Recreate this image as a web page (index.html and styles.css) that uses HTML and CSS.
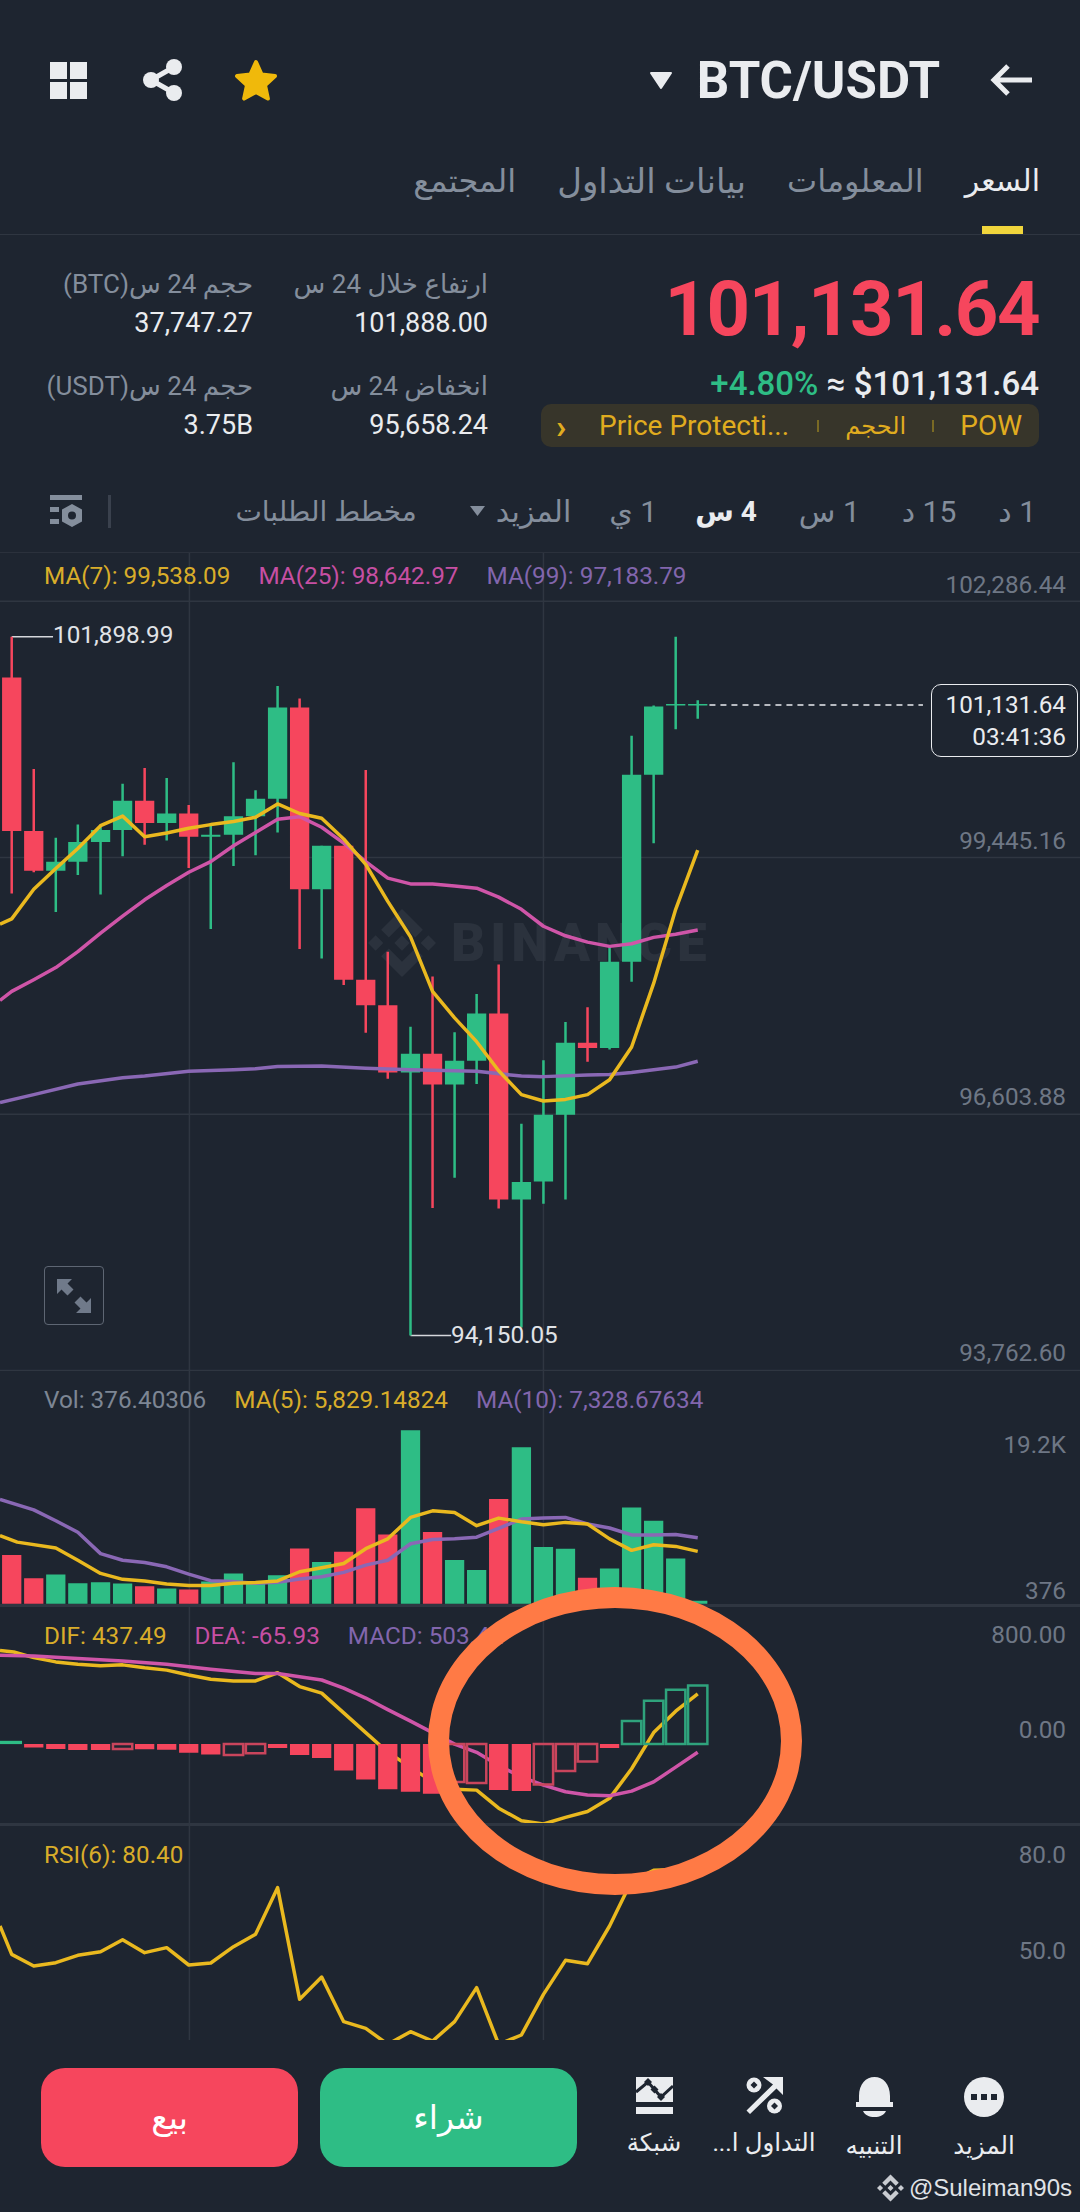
FILE: index.html
```html
<!DOCTYPE html>
<html lang="ar">
<head>
    <meta charset="utf-8">
    <title>BTC/USDT</title>
    <link rel="stylesheet" href="styles.css">
</head>
<body>
<div class="page">

    <div class="topbar">
        <div class="top-tools">
            <svg class="ico-grid" width="37" height="37" viewBox="0 0 37 37"><path d="M0 0h17v17H0zM20 0h17v17H20zM0 20h17v17H0zM20 20h17v17H20z"/></svg>
            <svg class="ico-share" width="40" height="42" viewBox="0 0 40 42"><path class="share-line" d="M31 8L8 21L31 34"/><circle cx="31" cy="8" r="8"/><circle cx="8" cy="21" r="8"/><circle cx="31" cy="34" r="8"/></svg>
            <svg class="ico-star" width="44" height="42" viewBox="0 0 44 42"><path d="M22 3l5.6 12.6 13.4 1.4-10 9.2 2.9 13.4L22 33l-11.9 6.6L13 26.2 3 17l13.4-1.4z"/></svg>
        </div>
        <div class="pair">
            <svg class="ico-caret" width="26" height="19" viewBox="0 0 26 19"><path d="M3 2h20L13 17z"/></svg>
            <span class="pair-name">BTC/USDT</span>
            <svg class="ico-back" width="44" height="34" viewBox="0 0 44 34"><path d="M42 17H4M18 3L4 17l14 14"/></svg>
        </div>
    </div>

    <div class="tabs" dir="rtl">
        <span class="tab active">السعر</span>
        <span class="tab">المعلومات</span>
        <span class="tab tab-data">بيانات التداول</span>
        <span class="tab">المجتمع</span>
    </div>

    <div class="stats">
        <div class="stat-col col-vol" dir="rtl">
            <div class="stat">
                <div class="stat-label">حجم 24 س(BTC)</div>
                <div class="stat-value">37,747.27</div>
            </div>
            <div class="stat">
                <div class="stat-label">حجم 24 س(USDT)</div>
                <div class="stat-value">3.75B</div>
            </div>
        </div>
        <div class="stat-col col-range" dir="rtl">
            <div class="stat">
                <div class="stat-label">ارتفاع خلال 24 س</div>
                <div class="stat-value">101,888.00</div>
            </div>
            <div class="stat">
                <div class="stat-label">انخفاض 24 س</div>
                <div class="stat-value">95,658.24</div>
            </div>
        </div>
        <div class="price-col">
            <div class="price">101,131.64</div>
            <div class="change"><span class="pct">+4.80%</span> ≈ $101,131.64</div>
            <div class="tags">
                <span class="tag-chev">›</span>
                <span class="tag-main">Price Protecti...</span>
                <i class="tag-sep"></i>
                <span class="tag-ar">الحجم</span>
                <i class="tag-sep"></i>
                <span>POW</span>
            </div>
        </div>
    </div>

    <div class="intervals" dir="rtl">
        <span>1 د</span>
        <span>15 د</span>
        <span>1 س</span>
        <span class="on">4 س</span>
        <span>1 ي</span>
        <span class="more">المزيد <svg width="17" height="12" viewBox="0 0 17 12"><path d="M1 1h15L8.500 11z"/></svg></span>
        <span class="depth">مخطط الطلبات</span>
        <div class="int-tools">
            <i class="int-sep"></i>
            <svg class="ico-settings" width="36" height="33" viewBox="0 0 36 33"><path d="M0 0h32v5H0zM0 12h9v5H0zM0 24h9v5H0z"/><path fill-rule="evenodd" d="M22 9l10 5.500v12L22 32l-10-5.500v-12zM22 16.500a4 4 0 1 0 0 8a4 4 0 1 0 0-8z"/></svg>
        </div>
    </div>

    <div class="chart">

        <div class="pane pane-main">
            <div class="wm">
                <svg class="bn" width="68" height="68" viewBox="0 0 32 32"><path d="M9.800 13.400L16 7.200l6.200 6.200 3.600-3.600L16 0 6.200 9.800zM9.800 18.600L16 24.800l6.200-6.200 3.600 3.600L16 32l-9.800-9.800zM0 16l3.600-3.600L7.200 16l-3.600 3.600zM24.800 16l3.600-3.600L32 16l-3.600 3.600zM16 12.400l3.600 3.600-3.600 3.600-3.600-3.600z"/></svg>
                <span>BINANCE</span>
            </div>
            <svg class="plot" viewBox="0 -13 1568 1545" preserveAspectRatio="none">
                <path class="grid" d="M0 78H1568M0 562H1568M0 1047H1568M0 1531H1568M275 -13V1532M789 -13V1532"/>
                <path class="leader" d="M17 145H77M596 1465H655"/>
                <path class="wick up" d="M81 525V665M113 500V595M146 500V632M178 423V560M242 412V530M306 497V697M339 382V578M371 435V558M403 238V515M467 540V753M596 882V1465M660 892V1167M692 820V990M757 1065V1450M789 945V1216M821 873V1208M885 730V925M917 332V797M949 275V535M981 145V320M1013 265V300"/>
                <path class="wick down" d="M17 145V630M49 395V590M210 393V538M274 463V582M435 262V735M499 540V803M531 397V893M563 740V980M628 787V1224M724 764V1225M853 845V948"/>
                <path class="bar up" d="M67 570h28v17h-28zM99 533h28v37h-28zM132 510h28v23h-28zM164 455h28v55h-28zM228 479h28v18h-28zM292 519h28v4h-28zM325 484h28v35h-28zM357 451h28v33h-28zM389 279h28v172h-28zM453 540h28v82h-28zM582 933h28v35h-28zM646 946h28v45h-28zM678 857h28v89h-28zM743 1175h28v33h-28zM775 1048h28v126h-28zM807 912h28v136h-28zM871 759h28v163h-28zM903 406h28v353h-28zM935 277h28v129h-28zM967 272h28v3h-28zM999 272h28v3h-28z"/>
                <path class="bar down" d="M3 222h28v290h-28zM35 512h28v75h-28zM196 455h28v42h-28zM260 479h28v44h-28zM421 279h28v343h-28zM485 540h28v253h-28zM517 793h28v48h-28zM549 841h28v127h-28zM614 933h28v58h-28zM710 857h28v351h-28zM839 912h28v10h-28z"/>
                <polyline class="ma ma-purple" points="0,1025 49,1010 113,990 178,978 210,975 274,966 339,963 371,961 403,957 467,956 531,960 596,963 692,966 757,975 789,976 853,973 885,972 917,968 981,958 1013,947"/>
                <polyline class="ma ma-pink" points="0,832 17,815 49,793 81,770 113,740 146,705 178,673 210,642 242,615 274,590 306,570 339,540 371,515 403,490 435,485 467,505 499,535 531,570 563,601 596,612 628,612 660,616 692,620 724,637 757,660 789,692 821,710 853,722 885,730 917,725 949,713 981,707 1013,699"/>
                <polyline class="ma ma-yellow" points="0,688 17,678 49,622 81,583 113,545 146,502 178,484 210,523 242,516 274,507 306,500 339,494 371,486 403,461 435,479 467,488 499,527 531,575 563,645 596,712 628,815 660,865 692,910 724,965 757,1010 789,1022 821,1019 853,1010 885,982 917,920 949,800 981,660 1013,548"/>
                <path class="last" d="M1030 274H1340"/>
            </svg>
            <div class="legend">
                <span class="c-yellow">MA(7): 99,538.09</span>
                <span class="c-pink">MA(25): 98,642.97</span>
                <span class="c-purple">MA(99): 97,183.79</span>
            </div>
            <div class="axis">
                <span>102,286.44</span>
                <span>99,445.16</span>
                <span>96,603.88</span>
                <span>93,762.60</span>
            </div>
            <span class="note note-high">101,898.99</span>
            <span class="note note-low">94,150.05</span>
            <div class="price-tag">
                <span>101,131.64</span>
                <span>03:41:36</span>
            </div>
            <div class="expand">
                <svg width="40" height="40" viewBox="0 0 40 40"><path d="M3 3h15l-4.500 4.500 6 6-6 6-6-6L3 18zM37 37H22l4.500-4.500-6-6 6-6 6 6L37 22z"/></svg>
            </div>
        </div>

        <div class="pane pane-vol">
            <svg class="plot" viewBox="0 0 1568 708" preserveAspectRatio="none">
                <path class="grid" d="M275 0V708M789 0V708"/>
                <path class="bar up" d="M67 618h28V707h-28zM99 645h28V707h-28zM132 642h28V707h-28zM164 646h28V707h-28zM228 661h28V707h-28zM292 640h28V707h-28zM325 615h28V707h-28zM357 640h28V707h-28zM389 621h28V707h-28zM453 580h28V707h-28zM582 180h28V707h-28zM646 574h28V707h-28zM678 605h28V707h-28zM743 232h28V707h-28zM775 535h28V707h-28zM807 540h28V707h-28zM871 600h28V707h-28zM903 415h28V707h-28zM935 455h28V707h-28zM967 570h28V707h-28zM999 698h28V707h-28z"/>
                <path class="bar down" d="M3 559h28V707h-28zM35 630h28V707h-28zM196 654h28V707h-28zM260 664h28V707h-28zM421 539h28V707h-28zM485 549h28V707h-28zM517 417h28V707h-28zM549 497h28V707h-28zM614 489h28V707h-28zM710 389h28V707h-28zM839 628h28V707h-28z"/>
                <polyline class="ma ma-purple" points="0,390 49,422 81,455 113,490 146,555 178,575 210,582 242,595 274,617 306,637 339,640 371,645 403,642 435,632 467,625 499,612 531,590 563,575 596,525 628,512 660,510 692,505 724,478 757,450 789,447 821,445 853,465 885,477 917,498 949,498 981,497 1013,507"/>
                <polyline class="ma ma-yellow" points="0,500 25,520 81,538 113,575 146,615 178,633 210,638 242,647 274,652 306,652 339,645 371,643 403,638 435,610 467,598 499,585 531,540 563,510 596,445 628,425 660,430 692,470 724,447 757,458 789,467 821,460 853,465 885,510 917,545 949,528 981,533 1013,548"/>
            </svg>
            <div class="legend">
                <span class="c-grey">Vol: 376.40306</span>
                <span class="c-yellow">MA(5): 5,829.14824</span>
                <span class="c-purple">MA(10): 7,328.67634</span>
            </div>
            <div class="axis">
                <span>19.2K</span>
                <span>376</span>
            </div>
        </div>

        <div class="pane pane-macd">
            <svg class="plot" viewBox="0 708 1568 657" preserveAspectRatio="none">
                <path class="grid" d="M275 708V1365M789 708V1365"/>
                <polyline class="ma ma-yellow" points="0,840 20,845 49,862 81,875 113,882 146,887 178,884 210,893 242,900 274,915 306,928 339,933 371,933 403,908 435,950 467,970 499,1030 531,1090 563,1150 596,1195 628,1240 660,1262 692,1265 724,1320 757,1358 789,1368 821,1348 853,1330 885,1290 917,1200 949,1090 981,1025 1013,972"/>
                <polyline class="ma ma-pink" points="0,855 49,857 113,865 178,872 242,882 306,897 371,910 403,910 467,930 499,955 531,985 563,1020 596,1055 628,1090 660,1125 692,1150 724,1190 757,1225 789,1250 821,1270 853,1280 885,1282 917,1268 949,1240 981,1195 1013,1150"/>
                <path class="bar up" d="M0 1115h32v10H0z"/>
                <path class="bar down" d="M35 1125h28v10h-28zM67 1125h28v15h-28zM99 1125h28v18h-28zM132 1125h28v18h-28zM196 1125h28v16h-28zM228 1125h28v17h-28zM260 1125h28v26h-28zM292 1125h28v32h-28zM389 1125h28v12h-28zM421 1125h28v33h-28zM453 1125h28v42h-28zM485 1125h28v80h-28zM517 1125h28v108h-28zM549 1125h28v137h-28zM582 1125h28v145h-28zM614 1125h28v151h-28zM710 1125h28v140h-28zM743 1125h28v143h-28zM871 1125h28v12h-28z"/>
                <path class="hollow h-down" d="M164 1125h28v15h-28zM325 1125h28v33h-28zM357 1125h28v28h-28zM646 1125h28v115h-28zM678 1125h28v118h-28zM775 1125h28v123h-28zM807 1125h28v82h-28zM839 1125h28v53h-28z"/>
                <path class="hollow h-up" d="M903 1055h28v70h-28zM935 993h28v132h-28zM967 960h28v165h-28zM999 947h28v178h-28z"/>
            </svg>
            <div class="legend">
                <span class="c-yellow">DIF: 437.49</span>
                <span class="c-pink">DEA: -65.93</span>
                <span class="c-purple">MACD: 503.42</span>
            </div>
            <div class="axis">
                <span>800.00</span>
                <span>0.00</span>
            </div>
        </div>

        <div class="pane pane-rsi">
            <svg class="plot" viewBox="0 75 1568 642" preserveAspectRatio="none">
                <path class="grid" d="M275 75V720M789 75V720"/>
                <polyline class="ma ma-yellow" points="0,375 17,460 49,495 81,485 113,463 146,452 178,416 210,455 242,440 274,492 306,486 339,437 371,400 403,260 435,595 467,528 499,662 531,682 563,730 596,692 628,720 660,662 692,560 724,730 757,702 789,580 821,478 853,488 885,375 917,240 949,208 970,206"/>
            </svg>
            <div class="legend">
                <span class="c-yellow">RSI(6): 80.40</span>
            </div>
            <div class="axis">
                <span>80.0</span>
                <span>50.0</span>
            </div>
        </div>

        <div class="ring"></div>
    </div>

    <div class="bottom">
        <button class="btn btn-sell">بيع</button>
        <button class="btn btn-buy">شراء</button>
        <div class="tools" dir="rtl">
            <div class="tool">
                <svg width="40" height="40" viewBox="0 0 40 40"><circle cx="20" cy="20" r="20"/><path class="cut" d="M7 17h6v6H7zM17 17h6v6h-6zM27 17h6v6h-6z"/></svg>
                <span>المزيد</span>
            </div>
            <div class="tool">
                <svg width="37" height="40" viewBox="0 0 37 40"><path d="M3 25v-6C3 7 10 0 18.500 0S34 7 34 19v6l3 0v5H0v-5zM7 34h23c-2 4-6 6-11.500 6S9 38 7 34z"/></svg>
                <span>التنبيه</span>
            </div>
            <div class="tool">
                <svg width="37" height="37" viewBox="0 0 37 37"><path d="M17 0h20v18l-6.500-6.500L4 37l-3.500-3.500L27 7.500z"/><circle cx="8" cy="8" r="7.500"/><path class="cut" d="M8 4.500L11.500 8 8 11.500 4.500 8z"/><circle cx="28.500" cy="29" r="7.500"/><path class="cut" d="M28.500 25.500L32 29l-3.500 3.500L25 29z"/></svg>
                <span>التداول ا...</span>
            </div>
            <div class="tool">
                <svg width="37" height="37" viewBox="0 0 37 37"><path d="M0 0h37v25H0zM0 30h37v7H0z"/><path class="cut-line" d="M0 15L12 5L25 20L37 9"/><path class="cut" d="M12 1l4 4-4 4-4-4zM18.500 8.500l4 4-4 4-4-4zM25 16l4 4-4 4-4-4z"/></svg>
                <span>شبكة</span>
            </div>
        </div>
        <div class="credit">
            <svg width="27" height="28" viewBox="0 0 32 32"><path d="M9.800 13.400L16 7.200l6.200 6.200 3.600-3.600L16 0 6.200 9.800zM9.800 18.600L16 24.800l6.200-6.200 3.600 3.600L16 32l-9.800-9.800zM0 16l3.600-3.600L7.200 16l-3.600 3.600zM24.800 16l3.600-3.600L32 16l-3.600 3.600zM16 12.400l3.600 3.600-3.600 3.600-3.600-3.600z"/></svg>
            <span>@Suleiman90s</span>
        </div>
    </div>

</div>
</body>
</html>
```

FILE: styles.css
```css
* {
    margin: 0;
    padding: 0;
    box-sizing: border-box;
}

body {
    background: #1e2530;
    color: #eaecef;
    font-family: Roboto, "DejaVu Sans", sans-serif;
}

.page {
    width: 1080px;
    height: 2212px;
    overflow: hidden;
    position: relative;
}

/* top bar */
.topbar {
    height: 160px;
    padding: 0 46px 0 50px;
    display: flex;
    align-items: center;
    justify-content: space-between;
}

.top-tools {
    display: flex;
    align-items: center;
    gap: 56px;
}

.top-tools svg, .pair svg {
    display: block;
}

.ico-grid, .ico-share {
    fill: #eaecef;
}

.share-line {
    fill: none;
    stroke: #eaecef;
    stroke-width: 5;
}

.ico-star {
    margin-left: -5px;
}

.ico-star path {
    fill: #f0b90b;
    stroke: #f0b90b;
    stroke-width: 4;
    stroke-linejoin: round;
}

.pair {
    display: flex;
    align-items: center;
}

.ico-caret path {
    fill: #eaecef;
    stroke: #eaecef;
    stroke-width: 2;
    stroke-linejoin: round;
}

.pair-name {
    font-size: 51px;
    font-weight: 700;
    margin: 0 50px 0 23px;
}

.ico-back path {
    fill: none;
    stroke: #eaecef;
    stroke-width: 5;
}

/* tabs */
.tabs {
    height: 75px;
    padding: 0 40px 0 0;
    display: flex;
    gap: 41px;
    border-bottom: 1px solid #2f3641;
}

.tab {
    position: relative;
    font-size: 32px;
    line-height: 42px;
    color: #848e9c;
}

.tab-data {
    font-size: 34px;
}

.tab.active {
    font-size: 30px;
    color: #eaecef;
}

.tab.active::after {
    content: "";
    position: absolute;
    left: 17px;
    right: 17px;
    top: 66px;
    height: 8px;
    background: #f0d53c;
}

/* stats */
.stats {
    height: 235px;
    padding: 31px 41px 0 0;
    display: flex;
}

.stat-col {
    flex: none;
    display: flex;
    flex-direction: column;
    gap: 24px;
}

.col-vol {
    width: 253px;
}

.col-range {
    width: 235px;
}

.stat-label {
    font-size: 26px;
    line-height: 36px;
    color: #848e9c;
}

.stat-value {
    font-size: 27px;
    line-height: 42px;
}

.price-col {
    flex: 1;
    min-width: 0;
    margin-left: 53px;
    text-align: right;
}

.price {
    margin-top: 6px;
    font-size: 76px;
    line-height: 74px;
    font-weight: 700;
    letter-spacing: -1.5px;
    color: #f6465d;
}

.change {
    margin-top: 20px;
    font-size: 33px;
    line-height: 36px;
    font-weight: 500;
}

.pct {
    color: #2ebd85;
}

.tags {
    margin-top: 2px;
    height: 43px;
    padding: 0 17px 0 15px;
    display: flex;
    align-items: center;
    border-radius: 10px;
    background: #37352a;
    color: #e0ac1f;
    font-size: 28px;
    white-space: nowrap;
}

.tag-chev {
    flex: none;
    width: 43px;
    font-size: 34px;
    line-height: 36px;
    font-weight: 700;
    text-align: left;
}

.tag-main {
    flex: 1;
    min-width: 0;
    text-align: left;
}

.tag-ar {
    font-size: 24px;
}

.tag-sep {
    flex: none;
    width: 2px;
    height: 12px;
    margin: 0 26px;
    background: #7a6a24;
}

/* interval row */
.intervals {
    height: 83px;
    padding: 0 44px 0 50px;
    display: flex;
    align-items: center;
    gap: 42px;
    font-size: 30px;
    color: #848e9c;
    border-bottom: 1px solid #2b313c;
}

.intervals .on {
    margin-left: -4px;
    font-size: 28px;
    color: #eaecef;
    font-weight: 700;
}

.more {
    margin-right: -4px;
    display: flex;
    align-items: center;
    gap: 10px;
}

.more svg {
    fill: #848e9c;
}

.depth {
    margin-right: 10px;
    font-size: 28px;
}

.int-tools {
    margin-right: auto;
    display: flex;
    align-items: center;
    gap: 22px;
}

.int-sep {
    width: 3px;
    height: 33px;
    background: #3a414d;
}

.ico-settings {
    fill: #848e9c;
}

/* chart */
.chart {
    position: relative;
    height: 1487px;
}

.pane {
    position: relative;
}

.pane-main {
    height: 818px;
}

.pane-vol {
    height: 236px;
    border-bottom: 3px solid #2f3641;
}

.pane-macd {
    height: 219px;
    border-bottom: 3px solid #2f3641;
}

.pane-rsi {
    height: 214px;
}

.plot {
    position: relative;
    display: block;
    width: 100%;
    height: 100%;
}

.plot path, .plot polyline {
    vector-effect: non-scaling-stroke;
}

.grid {
    fill: none;
    stroke: #2f3641;
    stroke-width: 1.5;
}

.leader {
    fill: none;
    stroke: #d5d8dc;
    stroke-width: 1.5;
}

.wick {
    fill: none;
    stroke-width: 2.5;
}

.wick.up {
    stroke: #2ebd85;
}

.wick.down {
    stroke: #f6465d;
}

.bar.up {
    fill: #2ebd85;
}

.bar.down {
    fill: #f6465d;
}

.hollow {
    fill: none;
    stroke-width: 2.5;
}

.h-down {
    stroke: #c9455c;
}

.h-up {
    stroke: #2fa37c;
}

.ma {
    fill: none;
    stroke-width: 3.5;
    stroke-linejoin: round;
}

.ma-yellow {
    stroke: #eab91f;
}

.ma-pink {
    stroke: #cf55a8;
}

.ma-purple {
    stroke: #8a68b5;
}

.last {
    fill: none;
    stroke: #eaecef;
    stroke-width: 1.5;
    stroke-dasharray: 6 5;
}

.legend {
    position: absolute;
    left: 44px;
    top: 15px;
    display: flex;
    gap: 28px;
    font-size: 24.3px;
    line-height: 28px;
}

.pane-main .legend {
    top: 9px;
}

.c-yellow {
    color: #d9ad2a;
}

.c-pink {
    color: #c64fa3;
}

.c-purple {
    color: #8266ad;
}

.c-grey {
    color: #7d8694;
}

.axis {
    position: absolute;
    right: 14px;
    display: flex;
    flex-direction: column;
    align-items: flex-end;
    font-size: 24.3px;
    line-height: 28px;
    color: #6e7785;
}

.pane-main .axis {
    top: 18px;
    gap: 228px;
}

.pane-vol .axis {
    top: 60px;
    gap: 118px;
}

.pane-macd .axis {
    top: 14px;
    gap: 67px;
}

.pane-rsi .axis {
    top: 15px;
    gap: 68px;
}

.note {
    position: absolute;
    font-size: 24.3px;
    line-height: 28px;
    color: #e0e3e7;
}

.note-high {
    left: 53px;
    top: 68px;
}

.note-low {
    left: 451px;
    top: 768px;
}

.price-tag {
    position: absolute;
    left: 931px;
    top: 131px;
    width: 147px;
    height: 73px;
    padding-right: 11px;
    display: flex;
    flex-direction: column;
    justify-content: center;
    align-items: flex-end;
    font-size: 24.3px;
    line-height: 32px;
    background: #1e2530;
    border: 1px solid #eaecef;
    border-radius: 10px;
}

.expand {
    position: absolute;
    left: 44px;
    top: 713px;
    width: 60px;
    height: 59px;
    display: flex;
    align-items: center;
    justify-content: center;
    border: 1px solid #5e6673;
    border-radius: 4px;
}

.expand svg {
    fill: #707a8a;
}

.wm {
    position: absolute;
    left: 368px;
    top: 356px;
    display: flex;
    align-items: center;
    gap: 15px;
    font-size: 53px;
    font-weight: 900;
    letter-spacing: 5px;
    line-height: 68px;
    color: #2b323d;
}

.bn {
    display: block;
    fill: #2b323d;
}

.ring {
    position: absolute;
    left: 428px;
    top: 1034px;
    width: 374px;
    height: 308px;
    border: 21px solid #ff7a45;
    border-radius: 50%;
}

/* bottom bar */
.bottom {
    position: relative;
    height: 172px;
    padding: 28px 41px 0;
    display: flex;
    gap: 22px;
}

.btn {
    width: 257px;
    height: 99px;
    border: none;
    border-radius: 24px;
    color: white;
    font-family: inherit;
    font-size: 33px;
}

.btn-sell {
    background: #f6465d;
}

.btn-buy {
    background: #2ebd85;
}

.tools {
    flex: 1;
    display: flex;
}

.tool {
    width: 110px;
    display: flex;
    flex-direction: column;
    align-items: center;
    font-size: 24.5px;
    line-height: 34px;
    color: #eaecef;
    white-space: nowrap;
}

.tool svg {
    display: block;
    margin: 9px 0 12px;
    fill: #eaecef;
}

.cut {
    fill: #1e2530;
}

.cut-line {
    fill: none;
    stroke: #1e2530;
    stroke-width: 3;
}

.credit {
    position: absolute;
    right: 8px;
    top: 134px;
    display: flex;
    align-items: center;
    gap: 5px;
    font-family: "Liberation Sans", sans-serif;
    font-size: 24px;
    color: #e0e3e7;
}

.credit svg {
    fill: #c9ccd1;
}
```
